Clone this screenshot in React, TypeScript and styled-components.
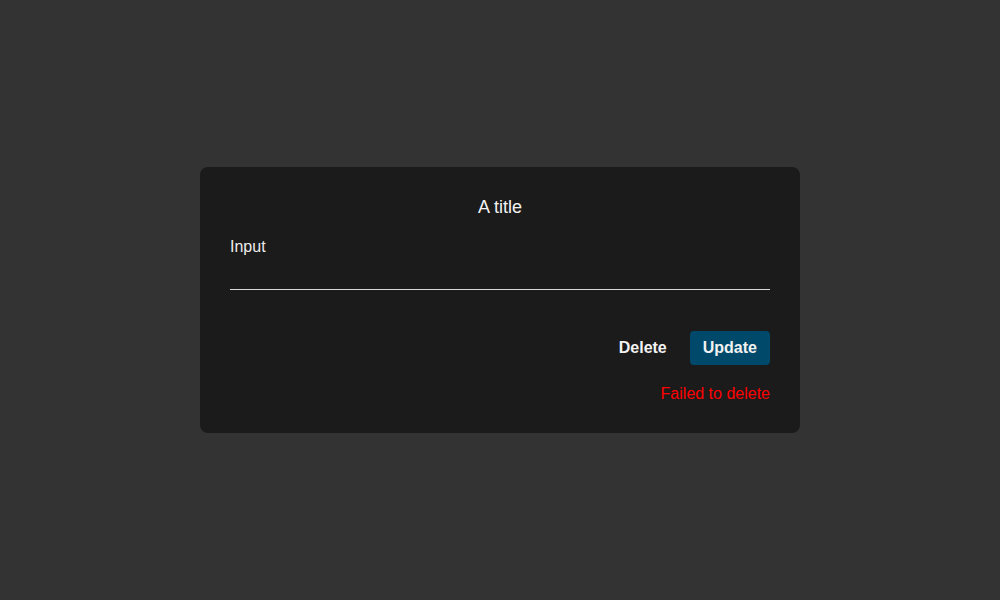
import React from "react";
import styled, { createGlobalStyle } from "styled-components";

const GlobalStyle = createGlobalStyle`
  html, body {
    margin: 0;
    padding: 0;
    background-color: #333333;
    font-family: "Liberation Sans", Arial, sans-serif;
  }
`;

const App: React.FC = () => {
  return (
    <>
      <GlobalStyle />
      <Page>
        <Card>
          <Title>A title</Title>
          <Field>
            <Label htmlFor="input">Input</Label>
            <TextInput id="input" type="text" />
          </Field>
          <Actions>
            <Button>Delete</Button>
            <Button primary>Update</Button>
          </Actions>
          <Error>Failed to delete</Error>
        </Card>
      </Page>
    </>
  );
};

export default App;

const Page = styled.div`
  width: 100vw;
  height: 100vh;
  display: flex;
  align-items: center;
  justify-content: center;
`;

const Card = styled.div`
  box-sizing: border-box;
  width: 600px;
  padding: 30px;
  background-color: #1b1b1b;
  border-radius: 8px;
  display: flex;
  flex-direction: column;
  color: #ececec;
`;

const Title = styled.h2`
  margin: 0;
  font-size: 18px;
  font-weight: 400;
  line-height: 20px;
  text-align: center;
  color: #f2f2f2;
`;

const Field = styled.div`
  display: flex;
  flex-direction: column;
  margin-top: 21px;
`;

const Label = styled.label`
  font-size: 16px;
  line-height: 18px;
  color: #ececec;
`;

const TextInput = styled.input`
  box-sizing: border-box;
  height: 34px;
  background: transparent;
  border: none;
  border-bottom: 1px solid #d8d8d8;
  color: #ececec;
  font-family: inherit;
  font-size: 16px;
  outline: none;
  padding: 0;
`;

const Actions = styled.div`
  display: flex;
  justify-content: flex-end;
  gap: 10px;
  margin-top: 41px;
`;

const Button = styled.button<{ primary?: boolean }>`
  height: 34px;
  padding: 0 13px;
  border: none;
  border-radius: 4px;
  font-family: inherit;
  font-size: 16px;
  font-weight: 700;
  color: #f2f2f2;
  cursor: pointer;
  background-color: ${({ primary }) => (primary ? "#00496b" : "transparent")};
`;

const Error = styled.div`
  margin-top: 20px;
  font-size: 16px;
  line-height: 18px;
  color: #ff0000;
  text-align: right;
`;
